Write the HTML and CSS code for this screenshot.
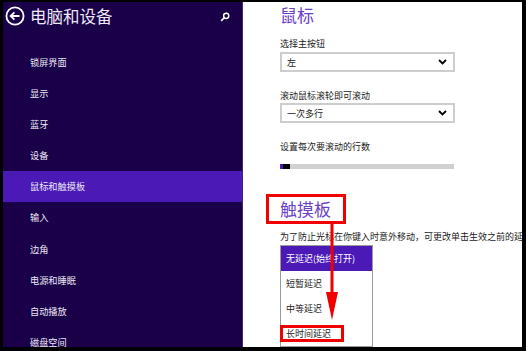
FILE: index.html
```html
<!DOCTYPE html>
<html lang="zh-CN">

<head>
    <meta charset="UTF-8">
    <meta name="viewport" content="width=device-width, initial-scale=1.0">
    <title>电脑和设备</title>
    <link rel="stylesheet" href="styles.css">
</head>

<body>
    <div class="screen">
        <div class="nav">
            <div class="nav-header">
                <svg class="back-icon" width="20" height="20" viewBox="0 0 20 20">
                    <circle cx="10" cy="10" r="8.6" fill="none" stroke="#fff" stroke-width="1.8" />
                    <path d="M14.5 10 H5.8 M9.4 6.3 L5.6 10 L9.4 13.7" fill="none" stroke="#fff" stroke-width="1.8" />
                </svg>
                <span class="nav-title">电脑和设备</span>
                <svg class="search-icon" width="10" height="10" viewBox="0 0 10 10">
                    <circle cx="6.2" cy="3.8" r="2.6" fill="none" stroke="#fff" stroke-width="1.5" />
                    <path d="M4.4 5.6 L1.2 8.8" stroke="#fff" stroke-width="1.7" />
                </svg>
            </div>
            <ul class="nav-list">
                <li>锁屏界面</li>
                <li>显示</li>
                <li>蓝牙</li>
                <li>设备</li>
                <li class="active">鼠标和触摸板</li>
                <li>输入</li>
                <li>边角</li>
                <li>电源和睡眠</li>
                <li>自动播放</li>
                <li>磁盘空间</li>
            </ul>
        </div>

        <div class="content">
            <h2 class="section-title">鼠标</h2>

            <div class="label label-first">选择主按钮</div>
            <div class="select select-first">
                <span>左</span>
                <svg width="9" height="6" viewBox="0 0 9 6"><path d="M1 1 L4.5 4.5 L8 1" fill="none" stroke="#000" stroke-width="1.8" /></svg>
            </div>

            <div class="label label-gap">滚动鼠标滚轮即可滚动</div>
            <div class="select select-second">
                <span>一次多行</span>
                <svg width="9" height="6" viewBox="0 0 9 6"><path d="M1 1 L4.5 4.5 L8 1" fill="none" stroke="#000" stroke-width="1.8" /></svg>
            </div>

            <div class="label label-gap">设置每次要滚动的行数</div>
            <div class="slider">
                <div class="slider-fill"></div>
                <div class="slider-thumb"></div>
            </div>

            <h2 class="section-title boxed">触摸板</h2>

            <div class="desc">为了防止光标在你键入时意外移动，可更改单击生效之前的延迟。</div>

            <ul class="dropdown">
                <li class="selected">无延迟(始终打开)</li>
                <li>短暂延迟</li>
                <li>中等延迟</li>
                <li class="marked">长时间延迟</li>
            </ul>

            <!-- annotation arrow -->
            <svg class="arrow" width="12" height="97" viewBox="0 0 12 97">
                <rect x="4.5" y="0" width="3" height="72" fill="#f00000" />
                <path d="M0 69 L12 69 L6 97 Z" fill="#f00000" />
            </svg>
        </div>
    </div>
</body>

</html>
```

FILE: styles.css
```css
body {
    margin: 0;
    background-color: #000;
    font-family: "Noto Sans CJK SC", "Liberation Sans", sans-serif;
    overflow: hidden;
}

.screen {
    display: flex;
    width: 519px;
    height: 345px;
    margin: 2px 0 0 3px;
    overflow: hidden;
}

.nav {
    width: 240px;
    flex-shrink: 0;
    box-sizing: border-box;
    background-color: #190049;
    border-right: 1px solid #3b2c68;
    color: #ece8f4;
}

.nav-header {
    display: flex;
    align-items: center;
    height: 27px;
    padding: 0 12px 0 2px;
}

.nav-title {
    margin-left: 5px;
    font-size: 16.5px;
    line-height: 20px;
}

.search-icon {
    margin-left: auto;
    margin-top: 3px;
}

.nav-list {
    list-style: none;
    margin: 17.5px 0 0;
    padding: 0;
}

.nav-list li {
    height: 31.2px;
    line-height: 31.2px;
    padding-left: 27px;
    font-size: 9.2px;
}

.nav-list li.active {
    background-color: #4a19b6;
}

.content {
    position: relative;
    flex: 1;
    background-color: #fff;
    padding-left: 37px;
    color: #222;
}

.section-title {
    margin: 3px 0 0;
    font-size: 17px;
    font-weight: normal;
    line-height: 20px;
    color: #6b42c6;
}

.section-title.boxed {
    width: fit-content;
    margin: 25px 0 0 -14px;
    padding: 2px 12px 2px 11px;
    border: 3px solid #f00000;
}

.label {
    font-size: 9px;
    line-height: 12px;
    white-space: nowrap;
}

.label-first {
    margin-top: 13px;
}

.label-gap {
    margin-top: 18px;
}

.select {
    display: flex;
    align-items: center;
    justify-content: space-between;
    width: 175px;
    height: 20px;
    box-sizing: border-box;
    padding: 0 6px 0 5px;
    border: 2px solid #cdcdcd;
    font-size: 9px;
}

.select-first {
    margin-top: 2px;
}

.select-second {
    margin-top: 1px;
}

.slider {
    display: flex;
    width: 174px;
    height: 5px;
    margin-top: 11px;
    background-color: #d0d0d0;
}

.slider-fill {
    width: 3px;
    background-color: #4a19b6;
}

.slider-thumb {
    width: 7px;
    background-color: #000;
}

.desc {
    margin-top: 7px;
    font-size: 9px;
    line-height: 12px;
    white-space: nowrap;
}

.dropdown {
    list-style: none;
    width: 93px;
    margin: 2px 0 0;
    padding: 0;
    box-sizing: border-box;
    border: 1px solid #9a9a9a;
    font-size: 9px;
}

.dropdown li {
    position: relative;
    height: 25px;
    line-height: 25px;
    padding-left: 5px;
    white-space: nowrap;
}

.dropdown li.selected {
    background-color: #4a19b6;
    color: #fff;
}

/* red box around the last option */
.dropdown li.marked::after {
    content: "";
    position: absolute;
    left: -1px;
    top: 4px;
    width: 64px;
    height: 17px;
    box-sizing: border-box;
    border: 3px solid #f00000;
}

.arrow {
    position: absolute;
    left: 83px;
    top: 221px;
}
```
